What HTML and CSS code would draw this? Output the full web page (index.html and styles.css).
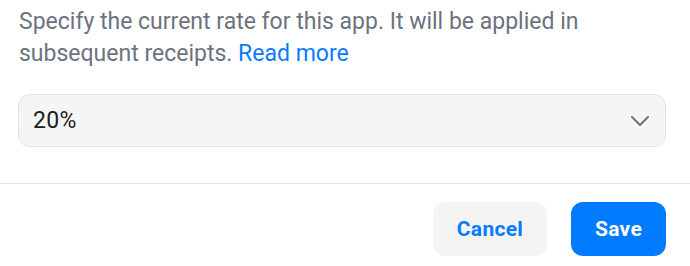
FILE: index.html
```html
<!DOCTYPE html>
<html>
<head>
<meta charset="utf-8">
<link rel="stylesheet" href="styles.css">
</head>
<body>
<div class="dialog">
  <div class="content">
    <p class="desc">Specify the current rate for this app. It will be applied in subsequent receipts. <a class="link" href="#">Read more</a></p>
    <div class="select">
      <span class="value">20%</span>
      <svg class="chev" width="20" height="12" viewBox="0 0 20 12"><path d="M2 2 L10 10 L18 2" fill="none" stroke="#6b7280" stroke-width="2" stroke-linecap="round" stroke-linejoin="round"/></svg>
    </div>
  </div>
  <div class="footer">
    <button class="btn cancel">Cancel</button>
    <button class="btn save">Save</button>
  </div>
</div>
</body>
</html>
```
FILE: styles.css
```css
html, body { margin: 0; padding: 0; background: #fff; }
body { font-family: Roboto, "Liberation Sans", sans-serif; width: 690px; height: 266px; overflow: hidden; }
.dialog { display: flex; flex-direction: column; }
.content { padding: 6px 24px 36px 19px; border-bottom: 1px solid #e5e5e5; }
.desc { margin: 0; width: 640px; font-size: 23px; line-height: 32px; color: #6b7380; }
.link { color: #0a7aff; text-decoration: none; }
.select { margin-top: 24px; width: 648px; height: 53px; box-sizing: border-box; border: 1px solid #e3e3e3; border-radius: 12px; background: #f5f5f5; display: flex; align-items: center; justify-content: space-between; padding: 0 15px 0 14px; margin-left: -1px; }
.value { font-size: 23px; color: #1c1c1e; letter-spacing: 0.3px; }
.chev { display: block; }
.footer { display: flex; justify-content: flex-end; gap: 24px; padding: 18px 24px 0 0; }
.btn { font-family: Roboto, "Liberation Sans", sans-serif; font-size: 21px; font-weight: 700; letter-spacing: 0.3px; height: 54px; border: none; border-radius: 12px; padding: 0; cursor: pointer; }
.cancel { background: #f4f4f4; color: #0a7aff; width: 114px; }
.save { background: #007aff; color: #fff; width: 95px; }
```
